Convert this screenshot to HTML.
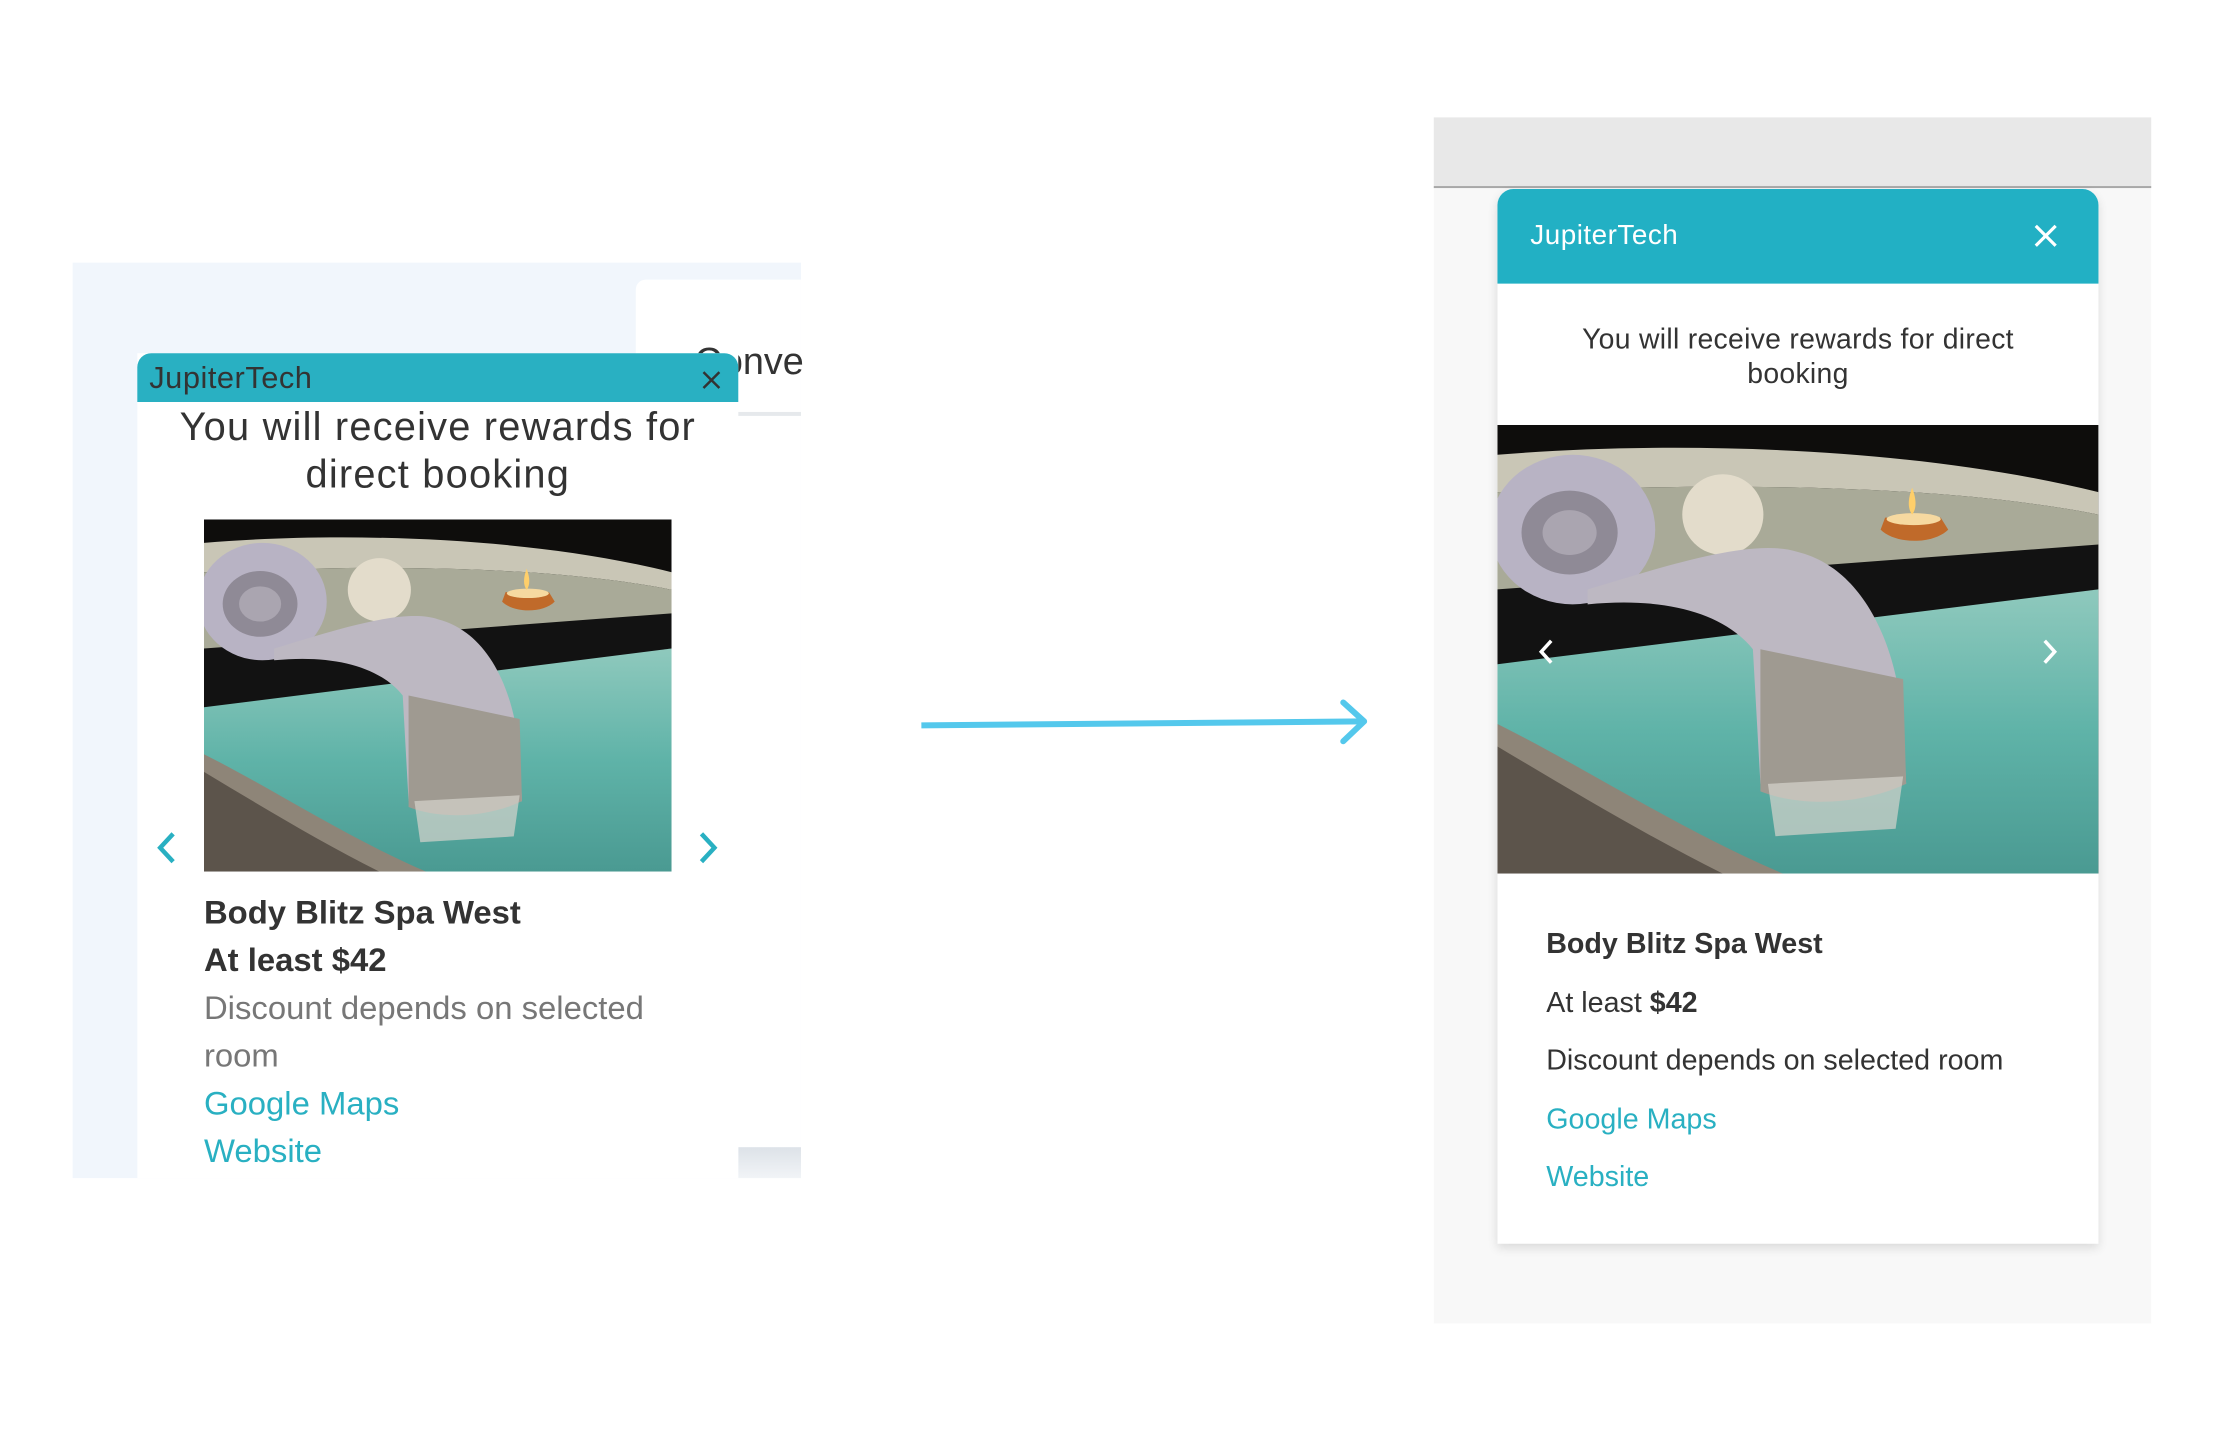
<!DOCTYPE html>
<html><head><meta charset="utf-8"><style>
*{margin:0;padding:0;box-sizing:border-box}
body{width:2226px;height:1444px;background:#fff;position:relative;overflow:hidden;font-family:"Liberation Sans",sans-serif}
#w{position:absolute;left:0;top:0;width:2226px;height:1444px;transform:scale(0.995);transform-origin:0 0}
.abs{position:absolute}
</style></head><body>
<svg width="0" height="0" style="position:absolute">
<defs>
<symbol id="spa" viewBox="0 0 400 300" preserveAspectRatio="none">
<linearGradient id="wat" x1="0" y1="0" x2="0" y2="1"><stop offset="0" stop-color="#8fc9bd"/><stop offset="0.5" stop-color="#5fb3a8"/><stop offset="1" stop-color="#4a9a92"/></linearGradient>
<rect width="400" height="300" fill="#0e0d0c"/>
<path d="M0 20 C120 10 280 15 400 45 L400 60 C300 40 150 38 0 45 Z" fill="#c9c6b6"/>
<path d="M0 45 C150 38 300 40 400 60 L400 110 L0 150 Z" fill="#a9aa98"/>
<path d="M0 110 L400 80 L400 110 L0 160 Z" fill="#121212"/>
<path d="M0 160 L400 110 L400 300 L0 300 Z" fill="url(#wat)"/>
<path d="M0 200 C60 230 120 270 190 300 L0 300 Z" fill="#8e8578"/>
<path d="M0 215 C50 245 100 275 150 300 L0 300 Z" fill="#5c544b"/>
<ellipse cx="50" cy="70" rx="55" ry="50" fill="#b8b3c4"/>
<ellipse cx="48" cy="72" rx="32" ry="28" fill="#8f8a96"/>
<ellipse cx="48" cy="72" rx="18" ry="15" fill="#aaa5b0"/>
<circle cx="150" cy="60" r="27" fill="#e3dccb"/>
<path d="M255 70 C265 80 290 80 300 70 L295 62 L258 62 Z" fill="#c06a2a"/>
<ellipse cx="277" cy="63" rx="18" ry="4" fill="#f6d9a0"/>
<path d="M276 42 C279 50 279 56 276 60 C273 56 273 50 276 42Z" fill="#ffcf6a"/>
<path d="M60 110 C110 95 170 75 200 85 C240 95 265 140 270 200 L272 240 C240 250 200 245 175 240 L170 150 C150 125 110 115 60 120 Z" fill="#bdb8c2"/>
<path d="M175 150 L270 170 L272 240 C240 255 200 255 175 245 Z" fill="#9f9a91"/>
<path d="M180 240 L270 235 L265 270 L185 275 Z" fill="#d6d3cc" opacity="0.7"/>
</symbol>
</defs>
</svg>
<div id="w">
<div class="abs" style="left:73px;top:264px;width:732px;height:920px;background:#f1f6fc"></div>
<div class="abs" style="left:639px;top:281px;width:166px;height:872px;background:#fff;border-radius:10px 0 0 0"></div>
<div class="abs" style="left:740px;top:414px;width:65px;height:4px;background:#e6e9ec"></div>
<div class="abs" style="left:698px;top:343px;font-size:38px;color:#333">Conve</div>
<div class="abs" style="left:742px;top:1153px;width:63px;height:31px;background:linear-gradient(#dde2e8,#f1f4f7)"></div>
<div class="abs" style="left:138px;top:355px;width:604px;height:829px;background:#fff"></div>
<div class="abs" style="left:138px;top:355px;width:604px;height:49px;background:#29b0c2;border-radius:14px 14px 0 0"></div>
<div class="abs" style="left:150px;top:362px;font-size:31px;color:#333;letter-spacing:0.5px">JupiterTech</div>
<svg class="abs" style="left:704px;top:371px" width="22" height="22" viewBox="0 0 22 22"><path d="M3 3L19 19M19 3L3 19" stroke="#333" stroke-width="2.5"/></svg>
<div class="abs" style="left:138px;top:405px;width:604px;text-align:center;font-size:40px;line-height:48px;color:#333;letter-spacing:1.2px">You will receive rewards for<br>direct booking</div>
<svg class="abs" style="left:205px;top:522px" width="470" height="354"><use href="#spa"/></svg>
<svg class="abs" style="left:156px;top:834px" width="24" height="36" viewBox="0 0 24 36"><path d="M18 4L5 18L18 32" fill="none" stroke="#29b0c2" stroke-width="4.5"/></svg>
<svg class="abs" style="left:699px;top:834px" width="24" height="36" viewBox="0 0 24 36"><path d="M6 4L19 18L6 32" fill="none" stroke="#29b0c2" stroke-width="4.5"/></svg>
<div class="abs" style="left:205px;top:893px;font-size:33px;line-height:48px;color:#333;width:520px">
<div style="font-weight:bold">Body Blitz Spa West</div>
<div style="font-weight:bold">At least $42</div>
<div style="color:#777">Discount depends on selected<br>room</div>
<div style="color:#29b0c2">Google Maps</div>
<div style="color:#29b0c2">Website</div>
</div>

<svg class="abs" style="left:0;top:0" width="2226" height="1444"><path d="M926 729L1370 725" stroke="#54c8ec" stroke-width="6" fill="none"/><path d="M1350 706L1371 725L1350 745" stroke="#54c8ec" stroke-width="6" fill="none" stroke-linecap="round" stroke-linejoin="round"/></svg>

<div class="abs" style="left:1441px;top:118px;width:721px;height:1212px;background:#f8f8f8"></div>
<div class="abs" style="left:1441px;top:118px;width:721px;height:71px;background:#e8e8e8;border-bottom:2px solid #a8a8a8"></div>
<div class="abs" style="left:1505px;top:190px;width:604px;height:1060px;background:#fff;border-radius:16px 16px 0 0;box-shadow:0 4px 10px rgba(0,0,0,0.12)"></div>
<div class="abs" style="left:1505px;top:190px;width:604px;height:95px;background:#22b0c4;border-radius:16px 16px 0 0"></div>
<div class="abs" style="left:1538px;top:220px;font-size:28px;color:#fff;letter-spacing:0.5px">JupiterTech</div>
<svg class="abs" style="left:2043px;top:224px" width="26" height="26" viewBox="0 0 26 26"><path d="M3 3L23 23M23 3L3 23" stroke="#fff" stroke-width="3.2"/></svg>
<div class="abs" style="left:1505px;top:324px;width:604px;text-align:center;font-size:28.5px;line-height:35px;color:#333;letter-spacing:0.3px">You will receive rewards for direct<br>booking</div>
<svg class="abs" style="left:1505px;top:427px" width="604" height="451"><use href="#spa"/></svg>
<svg class="abs" style="left:1544px;top:640px" width="20" height="30" viewBox="0 0 20 30"><path d="M15 4L5 15L15 26" fill="none" stroke="#fff" stroke-width="3.5"/></svg>
<svg class="abs" style="left:2050px;top:640px" width="20" height="30" viewBox="0 0 20 30"><path d="M5 4L15 15L5 26" fill="none" stroke="#fff" stroke-width="3.5"/></svg>
<div class="abs" style="left:1554px;top:920px;font-size:28.8px;line-height:58.5px;color:#333">
<div style="font-weight:bold">Body Blitz Spa West</div>
<div>At least <b>$42</b></div>
<div>Discount depends on selected room</div>
<div style="color:#29b0c2">Google Maps</div>
<div style="color:#29b0c2">Website</div>
</div>
</div>
</body></html>
